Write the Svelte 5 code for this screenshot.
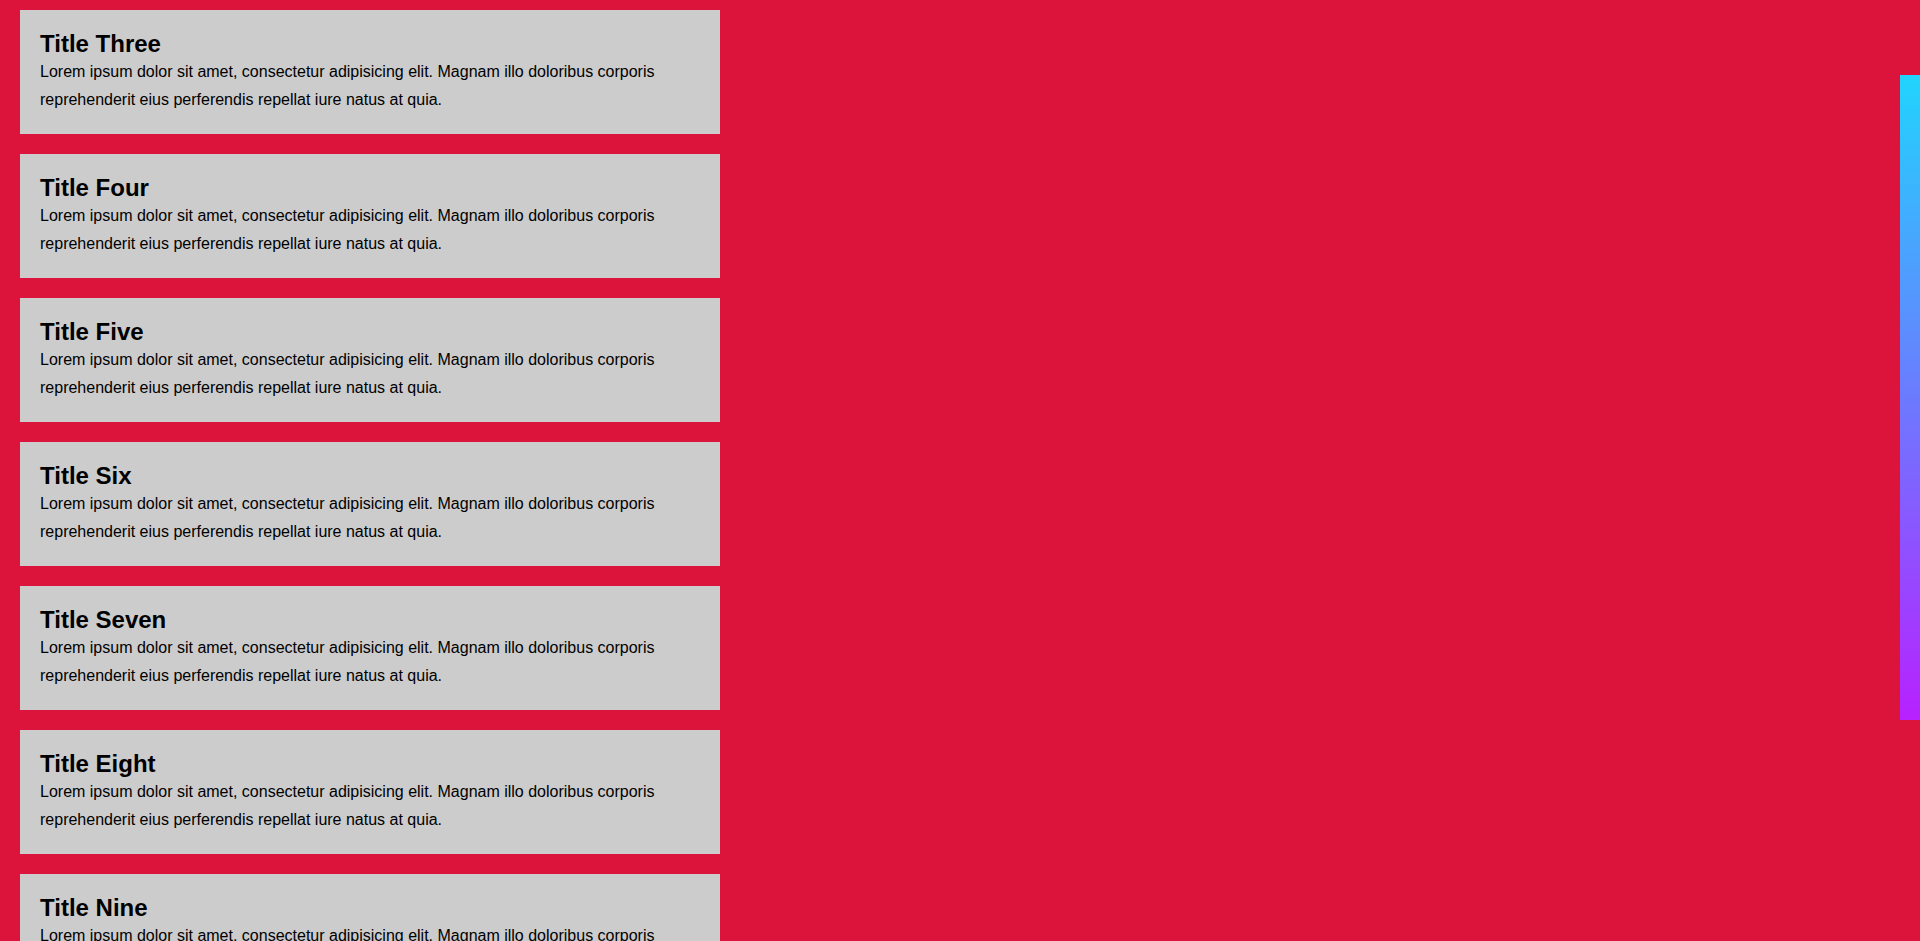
<script>
  const titles = ['Three', 'Four', 'Five', 'Six', 'Seven', 'Eight', 'Nine'];
</script>

<div class="page">
  <main class="list">
    {#each titles as title}
      <article class="card">
        <h2>Title {title}</h2>
        <p>
          Lorem ipsum dolor sit amet, consectetur adipisicing elit. Magnam illo doloribus corporis
          reprehenderit eius perferendis repellat iure natus at quia.
        </p>
      </article>
    {/each}
  </main>
  <div class="rail"></div>
</div>

<style>
  :global(body) {
    margin: 0;
    background: #dc143c;
    color: #000;
    font-family: Arial, "Liberation Sans", sans-serif;
    font-size: 16px;
    line-height: 28px;
  }

  .page {
    height: 100vh;
    overflow: hidden;
  }

  .list {
    display: flex;
    flex-direction: column;
    gap: 20px;
    max-width: 700px;
    padding: 10px 20px;
  }

  .card {
    padding: 20px;
    background: #ccc;
  }

  h2,
  p {
    margin: 0;
  }

  h2 {
    font-size: 24px;
    font-weight: 700;
  }

  /* Gradient strip that stays at the window's right edge */
  .rail {
    position: fixed;
    top: 75px;
    right: 0;
    width: 20px;
    height: 645px;
    background: linear-gradient(to bottom, #21d4fd, #b721ff);
  }
</style>
